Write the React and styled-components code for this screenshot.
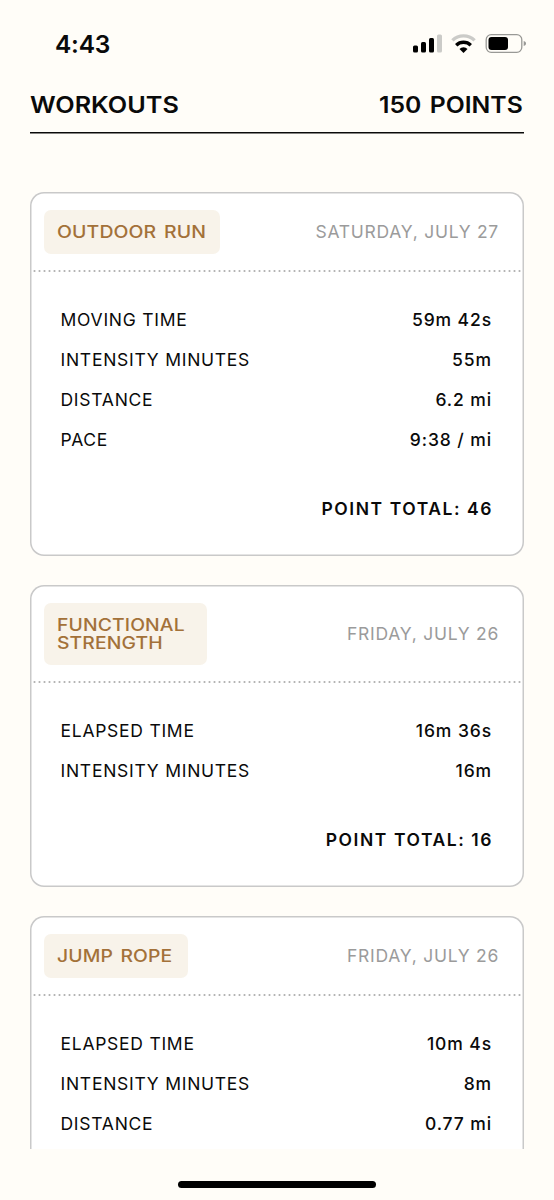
import React from 'react';
import styled, { createGlobalStyle } from 'styled-components';

const colors = {
    background: "#fffdf8",
    card: "#ffffff",
    border: "#c9c9c9",
    text: "#0a0a0a",
    muted: "#9b9b9b",
    accent: "#a37139",
    accentBackground: "#f8f3ea",
};

const GlobalStyle = createGlobalStyle`
    * {
        box-sizing: border-box;
    }

    body {
        margin: 0;
        background: ${colors.background};
        color: ${colors.text};
        font-family: Inter, "Liberation Sans", sans-serif;
    }
`;

const Screen = styled.div`
    display: flex;
    flex-direction: column;
    width: 554px;
    height: 1200px;
    overflow: hidden;
`;

const StatusBar = styled.div`
    display: flex;
    justify-content: space-between;
    align-items: center;
    flex: none;
    height: 88px;
    padding: 0 27px 0 55px;
`;

const Time = styled.span`
    font-size: 24.5px;
    font-weight: 600;
    line-height: 30px;
    letter-spacing: -0.2px;
`;

const StatusIcons = styled.svg`
    display: block;
    width: 114px;
    height: 22px;
`;

const Header = styled.header`
    display: flex;
    justify-content: space-between;
    flex: none;
    height: 45px;
    margin: 0 30px;
    padding: 3px 1.5px 0 0;
    border-bottom: 1px solid ${colors.text};
    box-shadow: 0 0.5px 0 ${colors.text};
`;

// Extended face: the glyphs are widened from the given edge
const WideText = styled.span`
    display: block;
    width: max-content;
    transform: scaleX(${props => props.$stretch ?? 1.2});
    transform-origin: ${props => props.$from ?? "left"} center;
`;

const Title = styled(WideText)`
    font-size: 22.5px;
    font-weight: 600;
    line-height: 28px;
    word-spacing: 2px;
`;

const List = styled.main`
    display: flex;
    flex-direction: column;
    gap: 29.7px;
    flex: none;
    height: 1016px;
    padding: 59px 30px 0;
    overflow: hidden;
`;

const Card = styled.section`
    flex: none;
    background: ${colors.card};
    border-radius: 14px;
    box-shadow: inset 0 0 0 1.5px ${colors.border};
`;

const CardHeader = styled.div`
    display: flex;
    justify-content: space-between;
    align-items: center;
    padding: 18px 25px 16px 14px;
`;

const Badge = styled.div`
    width: ${props => props.$width}px;
    padding: 13px;
    border-radius: 7px;
    background: ${colors.accentBackground};
    color: ${colors.accent};
`;

const BadgeText = styled(WideText)`
    font-size: 17px;
    font-weight: 500;
    line-height: 18px;
    letter-spacing: 0.1px;
    word-spacing: 2px;
    white-space: pre-line;
`;

const DateText = styled.span`
    color: ${colors.muted};
    font-size: 17.5px;
    line-height: 22px;
    letter-spacing: 0.73px;
`;

const Divider = styled.div`
    height: 2px;
    margin: 0 2px;
    background: radial-gradient(circle, #b4b4b4 0.8px, transparent 1.3px) 0 0 / 5px 2px repeat-x;
`;

const CardBody = styled.div`
    padding: 27px 32px 35.5px 30.5px;
`;

const Stat = styled.div`
    display: flex;
    justify-content: space-between;
    align-items: center;
    height: 40px;
    font-size: 17.5px;
    letter-spacing: 0.74px;
`;

const StatValue = styled.span`
    font-weight: 500;
    letter-spacing: 0.9px;
`;

const Total = styled.div`
    margin-top: 39px;
    font-size: 17.5px;
    font-weight: 600;
    line-height: 22px;
    letter-spacing: 1.55px;
    margin-right: -1px;
    text-align: right;
`;

const Footer = styled.footer`
    display: flex;
    justify-content: center;
    flex: 1;
    padding-top: 32px;
`;

const HomeIndicator = styled.div`
    width: 198px;
    height: 7px;
    border-radius: 4px;
    background: #000;
`;

const workouts = [
    {
        name: "OUTDOOR RUN",
        badgeWidth: 176,
        stretch: 1.145,
        date: "SATURDAY, JULY 27",
        stats: [
            ["MOVING TIME", "59m 42s"],
            ["INTENSITY MINUTES", "55m"],
            ["DISTANCE", "6.2 mi"],
            ["PACE", "9:38 / mi"],
        ],
        points: 46,
    },
    {
        name: "FUNCTIONAL\nSTRENGTH",
        badgeWidth: 163,
        stretch: 1.138,
        date: "FRIDAY, JULY 26",
        stats: [
            ["ELAPSED TIME", "16m 36s"],
            ["INTENSITY MINUTES", "16m"],
        ],
        points: 16,
    },
    {
        name: "JUMP ROPE",
        badgeWidth: 143.5,
        stretch: 1.137,
        date: "FRIDAY, JULY 26",
        stats: [
            ["ELAPSED TIME", "10m 4s"],
            ["INTENSITY MINUTES", "8m"],
            ["DISTANCE", "0.77 mi"],
        ],
    },
];

const DeviceStatus = () => (
    <StatusIcons viewBox="0 0 114 22">
        <rect x="0" y="12.5" width="5" height="7" rx="1.5" />
        <rect x="8" y="9" width="5" height="10.5" rx="1.5" />
        <rect x="16" y="5" width="5" height="14.5" rx="1.5" />
        <rect x="24" y="1.5" width="5" height="18" rx="1.5" fill="#cbcbc8" />
        <g fill="none" strokeWidth="3.4">
            <path d="M39.4 7.4a16 16 0 0 1 22.2 0" stroke="#cbcbc8" />
            <path d="M43.2 12.2a10.6 10.6 0 0 1 14.6 0" stroke="#000" />
        </g>
        <path d="M50.5 20l-4-4a5.6 5.6 0 0 1 8 0z" />
        <rect x="73.2" y="1.7" width="35.6" height="17.6" rx="5" fill="none" stroke="#999996" strokeWidth="1.3" />
        <rect x="75.5" y="4" width="19.5" height="13" rx="3" />
        <path d="M110.7 8c1.7.5 2.3 1.5 2.3 2.5s-.6 2-2.3 2.5z" fill="#999996" />
    </StatusIcons>
)

const Workout = ({ name, badgeWidth, stretch, date, stats, points }) => (
    <Card>
        <CardHeader>
            <Badge $width={badgeWidth}>
                <BadgeText $stretch={stretch}>{name}</BadgeText>
            </Badge>
            <DateText>{date}</DateText>
        </CardHeader>
        <Divider />
        <CardBody>
            {stats.map(([label, value]) => (
                <Stat key={label}>
                    <span>{label}</span>
                    <StatValue>{value}</StatValue>
                </Stat>
            ))}
            {points && <Total>POINT TOTAL: {points}</Total>}
        </CardBody>
    </Card>
)

const App = () => (
    <Screen>
        <GlobalStyle />
        <StatusBar>
            <Time>4:43</Time>
            <DeviceStatus />
        </StatusBar>
        <Header>
            <Title $stretch={1.12}>WORKOUTS</Title>
            <Title $stretch={1.1} $from="right">150 POINTS</Title>
        </Header>
        <List>
            {workouts.map(workout => <Workout key={workout.name} {...workout} />)}
        </List>
        <Footer>
            <HomeIndicator />
        </Footer>
    </Screen>
)

export default App;
